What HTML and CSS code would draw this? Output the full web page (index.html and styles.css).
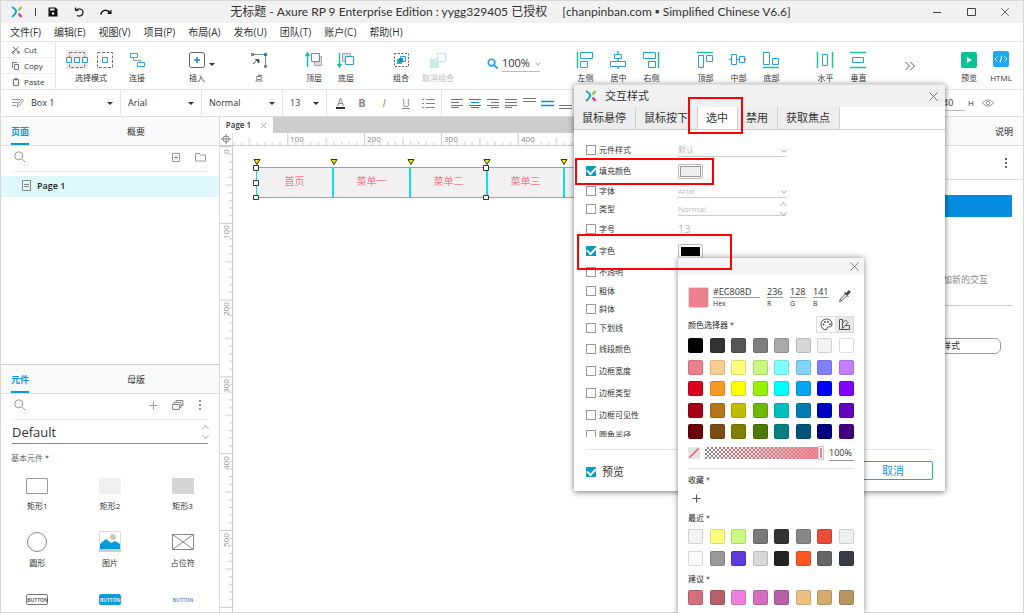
FILE: index.html
```html
<!DOCTYPE html>
<html lang="zh-CN">
<head>
<meta charset="utf-8">
<title>无标题 - Axure RP 9 Enterprise Edition</title>
<link rel="stylesheet" href="styles.css">
</head>
<body>
<svg class="defs" aria-hidden="true">
  <symbol id="logo" viewBox="0 0 12 12"><path d="M1 1Q6 4 5 6Q4 9 1 11" fill="none" stroke="#12a5dc" stroke-width="2"/><path d="M10.500 1L7.500 4.500" stroke="#8cc63f" stroke-width="2.200"/><path d="M7.500 7.500L10.500 11" stroke="#e5338c" stroke-width="2.200"/></symbol>
  <symbol id="close" viewBox="0 0 12 12"><path d="M1.500 1.500L10.500 10.500M10.500 1.500L1.500 10.500" fill="none" stroke="currentColor"/></symbol>
  <symbol id="search" viewBox="0 0 12 12"><circle cx="4.800" cy="4.800" r="4" fill="none" stroke="currentColor"/><path d="M7.800 7.800L11.500 11.500" stroke="currentColor"/></symbol>
  <symbol id="dots" viewBox="0 0 4 12"><path d="M1 1h2v2H1zM1 5h2v2H1zM1 9h2v2H1z" fill="currentColor"/></symbol>
</svg>
<div class="app">
  <header class="titlebar">
    <div class="quick">
      <svg width="12" height="12"><use href="#logo"/></svg>
      <span class="bar"></span>
      <button aria-label="保存"><svg width="10" height="10" viewBox="0 0 10 10"><path d="M1 .5H7.500L9.500 2.500V9.500H.5V1z" fill="#111"/><path d="M2 1.500h4.500v2H2z" fill="#f1f1f1"/><circle cx="5" cy="6.500" r="1.300" fill="#f1f1f1"/></svg></button>
      <button aria-label="撤销"><svg width="10" height="10" viewBox="0 0 10 10"><path d="M1.500 .5V3.500H4.500M1.500 3.500C4 .8 9 1.500 9 5.500C9 8.500 5.500 9.800 3 8.500" fill="none" stroke="#222" stroke-width="1.200"/></svg></button>
      <button aria-label="重做"><svg width="12" height="10" viewBox="0 0 12 10"><path d="M.7 7.500C2 2.500 7 2 10 6" fill="none" stroke="#111" stroke-width="1.500"/><path d="M11.500 2.500V7H7z" fill="#111"/></svg></button>
    </div>
    <h1>无标题 - Axure RP 9 Enterprise Edition : yygg329405 已授权 <span>[chanpinban.com ▪ Simplified Chinese V6.6]</span></h1>
    <div class="winctl">
      <button aria-label="最小化"><svg width="10" height="10"><path d="M1 5.500H9" stroke="#444"/></svg></button>
      <button aria-label="最大化"><svg width="10" height="10"><path d="M1.500 1.500h8v7h-8z" fill="none" stroke="#444"/></svg></button>
      <button aria-label="关闭"><svg width="10" height="10"><use href="#close"/></svg></button>
    </div>
  </header>
  <nav class="menubar">
    <button>文件(F)</button><button>编辑(E)</button><button>视图(V)</button><button>项目(P)</button><button>布局(A)</button><button>发布(U)</button><button>团队(T)</button><button>账户(C)</button><button>帮助(H)</button>
  </nav>
  <div class="toolbar">
    <div class="clip">
      <button><svg width="8" height="8" viewBox="0 0 8 8"><path d="M1 1L6.500 6M6.500 1L1 6" stroke="#666" fill="none"/><circle cx="1.200" cy="6.500" r="1" fill="none" stroke="#666"/><circle cx="6.500" cy="6.500" r="1" fill="none" stroke="#666"/></svg>Cut</button>
      <button><svg width="8" height="8" viewBox="0 0 8 8"><path d="M2.500 2.500h4v5h-4zM.5 6V.5H5" fill="none" stroke="#777"/></svg>Copy</button>
      <button><svg width="8" height="8" viewBox="0 0 8 8"><path d="M1.500 1.500h5v6h-5zM3 .5h2v1.500H3z" fill="none" stroke="#777"/></svg>Paste</button>
    </div>
    <div class="group g1">
      <button class="tool wide"><svg width="60" height="20" viewBox="0 0 60 20"><path d="M5 0h22v19H5z" fill="#ebebeb"/><path d="M8.500 2.500h15v15h-15zM36.500 2.500h15v15h-15z" fill="none" stroke="#777" stroke-dasharray="3 1.500"/><path d="M5.500 7.500h5v5h-5zM13.500 7.500h5v5h-5zM21.500 7.500h5v5h-5zM41.500 7.500h5v5h-5z" fill="#fff" stroke="#2c9de4"/></svg><span>选择模式</span></button>
      <button class="tool"><svg width="32" height="20" viewBox="0 0 32 20"><path d="M9.500 3.500h7v4h-7z" fill="none" stroke="#1cc29a"/><path d="M12.500 7.500v3h7v2" fill="none" stroke="#999"/><path d="M16.500 12.500h7v4h-7z" fill="none" stroke="#2c9de4"/></svg><span>连接</span></button>
    </div>
    <div class="group g2">
      <button class="tool"><svg width="32" height="20" viewBox="0 0 32 20"><rect x="8.500" y="2.500" width="15" height="15" rx="2" fill="none" stroke="#666"/><path d="M16 7v6M13 10h6" stroke="#1487d8" stroke-width="1.500"/><path d="M28 13h6l-3 3z" fill="#333"/></svg><span>插入</span></button>
    </div>
    <div class="group g3">
      <button class="tool"><svg width="32" height="20" viewBox="0 0 32 20"><path d="M9 4.500h13.500V16" fill="none" stroke="#888"/><path d="M8 3h3v3H8zM21 15h3v3h-3z" fill="#888"/><path d="M21 3h3v3h-3z" fill="#1487d8"/><path d="M10 14l3-3M12.500 9.500h3.500v3.500z" fill="#555" stroke="#555"/></svg><span>点</span></button>
    </div>
    <div class="group g4">
      <button class="tool"><svg width="32" height="20" viewBox="0 0 32 20"><path d="M9.500 17V4M7.500 6l2-3 2 3" fill="none" stroke="#1cc29a" stroke-width="1.500"/><path d="M16.500 6.500h7v9h-7z" fill="#ddd" stroke="#aaa"/><path d="M13.500 3.500h8v8h-8z" fill="#fff" stroke="#2c9de4"/></svg><span>顶层</span></button>
      <button class="tool"><svg width="32" height="20" viewBox="0 0 32 20"><path d="M9.500 3V16M7.500 14l2 3 2-3" fill="none" stroke="#1cc29a" stroke-width="1.500"/><path d="M12.500 3.500h8v8h-8z" fill="#ddd" stroke="#aaa"/><path d="M15.500 6.500h8v8h-8z" fill="#fff" stroke="#2c9de4"/></svg><span>底层</span></button>
    </div>
    <div class="group g4">
      <button class="tool"><svg width="32" height="20" viewBox="0 0 32 20"><path d="M9.500 3.500h14v13h-14z" fill="none" stroke="#666" stroke-dasharray="2 1.500"/><path d="M12 9h5v5h-5z" fill="#1cc29a"/><path d="M15.500 6.500h5v5h-5z" fill="#e7f5ff" stroke="#2c9de4"/><path d="M14 8h4v4h-4z" fill="#1487d8"/></svg><span>组合</span></button>
      <button class="tool off" disabled><svg width="32" height="20" viewBox="0 0 32 20"><path d="M8 9h9v9H8z" fill="#8fe0ca"/><path d="M15.500 3.500h8v8h-8z" fill="#fff" stroke="#8cc8ee"/><path d="M12 8h5v4h-5z" fill="#a6d8ee"/></svg><span>取消组合</span></button>
    </div>
    <div class="zoom"><svg width="11" height="11" viewBox="0 0 12 12"><circle cx="5" cy="5" r="3.600" fill="none" stroke="#1ba0e8" stroke-width="1.800"/><path d="M8 8l3.500 3.500" stroke="#1ba0e8" stroke-width="2"/></svg>
      <button>100%<i class="chev"></i></button></div>
    <div class="group g5">
      <button class="tool"><svg width="32" height="20" viewBox="0 0 32 20"><path d="M8.500 2v16" stroke="#1cc29a" stroke-width="1.500"/><path d="M11.500 2.500h12v6h-12zM11.500 11.500h7v6h-7z" fill="none" stroke="#2c9de4"/></svg><span>左侧</span></button>
      <button class="tool"><svg width="32" height="20" viewBox="0 0 32 20"><path d="M16 1v18" stroke="#1cc29a" stroke-width="1.500"/><path d="M12.500 4.500h7v4h-7zM8.500 11.500h15v5h-15z" fill="#fff" stroke="#2c9de4"/></svg><span>居中</span></button>
      <button class="tool"><svg width="32" height="20" viewBox="0 0 32 20"><path d="M23.500 2v16" stroke="#1cc29a" stroke-width="1.500"/><path d="M8.500 2.500h12v6h-12zM13.500 11.500h7v6h-7z" fill="none" stroke="#2c9de4"/></svg><span>右侧</span></button>
    </div>
    <div class="group g6">
      <button class="tool"><svg width="32" height="20" viewBox="0 0 32 20"><path d="M8 2.500h16" stroke="#1cc29a" stroke-width="1.500"/><path d="M9.500 5.500h5v12h-5zM17.500 5.500h6v6h-6z" fill="none" stroke="#2c9de4"/></svg><span>顶部</span></button>
      <button class="tool"><svg width="32" height="20" viewBox="0 0 32 20"><path d="M7 9.500h17" stroke="#1cc29a" stroke-width="1.500"/><path d="M9.500 4.500h5v10h-5zM17.500 6.500h5v6h-5z" fill="#fff" stroke="#2c9de4"/></svg><span>中部</span></button>
      <button class="tool"><svg width="32" height="20" viewBox="0 0 32 20"><path d="M8 17.500h16" stroke="#1cc29a" stroke-width="1.500"/><path d="M8.500 2.500h6v12h-6zM17.500 8.500h6v6h-6z" fill="none" stroke="#2c9de4"/></svg><span>底部</span></button>
    </div>
    <div class="group g6">
      <button class="tool"><svg width="32" height="20" viewBox="0 0 32 20"><path d="M8.500 2v16M23.500 2v16" stroke="#1cc29a" stroke-width="1.500"/><path d="M13.500 4.500h5v11h-5z" fill="none" stroke="#2c9de4"/></svg><span>水平</span></button>
      <button class="tool"><svg width="32" height="20" viewBox="0 0 32 20"><path d="M8 2.500h16M8 17.500h16" stroke="#1cc29a" stroke-width="1.500"/><path d="M10.500 7.500h11v5h-11z" fill="none" stroke="#2c9de4"/></svg><span>垂直</span></button>
    </div>
    <div class="publish">
      <button class="more" aria-label="更多"><svg width="12" height="10"><path d="M1.500 1l4 4-4 4M6.500 1l4 4-4 4" fill="none" stroke="#555"/></svg></button>
      <button class="tool"><svg width="32" height="20" viewBox="0 0 32 20"><rect x="8" y="2" width="16" height="16" rx="2" fill="#06c295"/><path d="M14 7l5 3-5 3z" fill="#fff"/></svg><span>预览</span></button>
      <button class="tool"><svg width="32" height="20" viewBox="0 0 32 20"><rect x="8" y="1" width="16" height="16" rx="2" fill="#1caaf5"/><path d="M12.500 6.500L10 9l2.500 2.500M19.500 6.500L22 9l-2.500 2.500M17 5.500l-2 7" fill="none" stroke="#fff"/></svg><span>HTML</span></button>
    </div>
  </div>
  <div class="format">
    <label class="pick p1"><svg width="12" height="10" viewBox="0 0 12 10"><path d="M0 1.500h8M0 4.500h6M0 7.500h4M5 9l1-3 4-5 1.500 1.500-4 5z" fill="none" stroke="#999"/></svg><select aria-label="样式"><option>Box 1</option></select></label>
    <label class="pick p2"><select aria-label="字体"><option>Arial</option></select></label>
    <label class="pick p2"><select aria-label="字形"><option>Normal</option></select></label>
    <label class="pick p3"><select aria-label="字号"><option>13</option></select></label>
    <div class="marks">
      <button class="ink">A</button><button><b>B</b></button><button><em>I</em></button><button><u>U</u></button>
      <button aria-label="列表"><svg width="13" height="10"><path d="M0 1.500h2M4 1.500h9M0 5.500h2M4 5.500h9M0 9.500h2M4 9.500h9" stroke="#888"/></svg></button>
    </div>
    <div class="aligns">
      <button aria-label="左对齐"><svg width="12" height="10"><path d="M0 1.500h12M0 4.500h8M0 7.500h12M0 9.500h8" stroke="#777"/></svg></button>
      <button aria-label="居中对齐"><svg width="12" height="10"><path d="M0 1.500h12M2 4.500h8M0 7.500h12M2 9.500h8" stroke="#1487d8"/></svg></button>
      <button aria-label="右对齐"><svg width="12" height="10"><path d="M0 1.500h12M4 4.500h8M0 7.500h12M4 9.500h8" stroke="#777"/></svg></button>
      <button aria-label="两端对齐"><svg width="12" height="10"><path d="M0 1.500h12M0 4.500h12M0 7.500h12M0 9.500h7" stroke="#777"/></svg></button>
      <button aria-label="顶端"><svg width="13" height="12"><path d="M0 1.500h13M0 4.500h13" stroke="#777"/></svg></button>
      <button aria-label="中间"><svg width="13" height="12"><path d="M0 4.500h13M0 8.500h13" stroke="#1487d8" stroke-width="1.500"/></svg></button>
      <button aria-label="底端"><svg width="13" height="12"><path d="M0 8.500h13M0 11.500h13" stroke="#777"/></svg></button>
    </div>
    <div class="size"><input aria-label="高度" value="40"><span>H</span>
      <button aria-label="可见"><svg width="12" height="8" viewBox="0 0 12 8"><path d="M.5 4Q6-2.500 11.500 4Q6 10.500 .5 4z" fill="none" stroke="#999"/><circle cx="6" cy="4" r="1.800" fill="none" stroke="#999"/></svg></button></div>
  </div>
  <main class="work">
    <aside class="left">
      <section class="pane">
        <div class="tabs"><button class="on">页面</button><button>概要</button></div>
        <div class="find"><svg width="12" height="12"><use href="#search"/></svg>
          <button aria-label="添加页面"><svg width="9" height="10"><path d="M.5 1.500h7v8h-7zM4 3.500v4M2 5.500h4" fill="none" stroke="#999"/></svg></button>
          <button aria-label="添加文件夹"><svg width="11" height="10"><path d="M.5 1.500h4l1 1.500h5v6H.5z" fill="none" stroke="#999"/></svg></button></div>
        <a class="page" href="#page1"><svg width="9" height="11"><path d="M.5.5h8v10h-8zM2 4.500h5M2 6.500h5" fill="none" stroke="#888"/></svg>Page 1</a>
      </section>
      <section class="pane lib">
        <div class="tabs"><button class="on">元件</button><button>母版</button></div>
        <div class="find"><svg width="12" height="12"><use href="#search"/></svg>
          <button aria-label="添加"><svg width="9" height="9"><path d="M4.500.5v8M.5 4.500h8" stroke="#999"/></svg></button>
          <button aria-label="元件库"><svg width="12" height="10"><path d="M.5 4.500h7v5h-7zM2 4.500v-2h7v5h-1.500M4 2.500v-2h7v5H9" fill="none" stroke="#888"/></svg></button>
          <button aria-label="选项"><svg width="4" height="12"><use href="#dots"/></svg></button></div>
        <label class="library"><select aria-label="元件库"><option>Default</option></select><i class="updown"></i></label>
        <h2>基本元件 <small>▼</small></h2>
        <div class="widgets">
          <div><svg width="22" height="16"><path d="M.5.5h21v15H.5z" fill="#fff" stroke="#999"/></svg>矩形1</div>
          <div><svg width="22" height="16"><path d="M0 0h22v16H0z" fill="#f0f0f0"/></svg>矩形2</div>
          <div><svg width="22" height="16"><path d="M0 0h22v16H0z" fill="#d6d6d6"/></svg>矩形3</div>
          <div class="big"><svg width="22" height="22"><circle cx="11" cy="11" r="9.500" fill="#fff" stroke="#888"/></svg>圆形</div>
          <div class="big"><svg width="22" height="22"><path d="M.5.500h21v18H.5z" fill="#fff" stroke="#ddd"/><circle cx="14" cy="6" r="3" fill="#c8c8c8"/><path d="M1 13l6-5 5 4 4-2 5 3v5H1z" fill="#049bdc"/><path d="M0 18h22v3H0z" fill="#ccc"/></svg>图片</div>
          <div class="big"><svg width="22" height="22"><path d="M.5 3.500h21v15H.5zM.5 3.500l21 15M21.500 3.500L.5 18.500" fill="#fff" stroke="#888"/></svg>占位符</div>
          <div><span class="wb">BUTTON</span></div>
          <div><span class="wb fill">BUTTON</span></div>
          <div><span class="wb bare">BUTTON</span></div>
        </div>
      </section>
    </aside>
    <section class="center">
      <div class="pagetabs"><button>Page 1 <svg width="7" height="7" viewBox="0 0 12 12"><use href="#close"/></svg></button></div>
      <div class="rulerrow">
        <svg class="corner" width="12" height="12"><circle cx="6" cy="6" r="3" fill="none" stroke="#888"/><path d="M6 1v10M1 6h10" stroke="#888"/></svg>
        <svg class="hr" height="12"><defs><pattern id="ht" x="-22.500" width="76.800" height="12" patternUnits="userSpaceOnUse"><path d="M.5 0v12M38.900 5v7M8.200 9v3M15.900 9v3M23.500 9v3M31.200 9v3M46.600 9v3M54.300 9v3M61.900 9v3M69.600 9v3" stroke="#ccc"/></pattern></defs><rect width="100%" height="12" fill="url(#ht)"/><text x="57" y="9">100</text><text x="134" y="9">200</text><text x="211" y="9">300</text><text x="288" y="9">400</text></svg>
      </div>
      <div class="canvasrow">
        <svg class="vr" width="12" height="100%"><defs><pattern id="vt" y="0" width="12" height="76.800" patternUnits="userSpaceOnUse"><path d="M0 .5h12M5 38.900h7M9 8.200h3M9 15.900h3M9 23.500h3M9 31.200h3M9 46.600h3M9 54.300h3M9 61.900h3M9 69.600h3" stroke="#ccc"/></pattern></defs><rect width="12" height="100%" fill="url(#vt)"/><g><text transform="translate(9 8) rotate(-90)">0</text><text transform="translate(9 93) rotate(-90)">100</text><text transform="translate(9 170) rotate(-90)">200</text><text transform="translate(9 247) rotate(-90)">300</text><text transform="translate(9 324) rotate(-90)">400</text><text transform="translate(9 401) rotate(-90)">500</text></g></svg>
        <div class="canvas">
          <div class="nodes"><div>首页</div><div>菜单一</div><div>菜单二</div><div>菜单三</div><div>菜单四</div></div>
          <svg class="handles" width="320" height="44" viewBox="0 0 320 44"><g fill="#f4e800" stroke="#333"><path d="M2 3.500h6l-3 5z"/><path d="M79 3.500h6l-3 5z"/><path d="M156 3.500h6l-3 5z"/><path d="M232 3.500h6l-3 5z"/><path d="M309 3.500h6l-3 5z"/></g><path d="M1.500 9.500h5v5h-5zM1.500 24.500h5v5h-5zM1.500 39.500h5v4h-5zM231.500 9.500h5v5h-5zM231.500 39.500h5v4h-5z" fill="#fff" stroke="#333"/></svg>
        </div>
      </div>
    </section>
    <aside class="right">
      <div class="tabs"><button>说明</button></div>
      <div class="opts"><button aria-label="选项"><svg width="4" height="12"><use href="#dots"/></svg></button></div>
      <button class="primary" aria-label="新建交互"></button>
      <p>点击上方按钮，添加新的交互</p>
      <button class="styles">交互样式</button>
    </aside>
  </main>

  <div class="dialog" role="dialog" aria-label="交互样式">
    <div class="dhead"><svg width="12" height="12"><use href="#logo"/></svg><span>交互样式</span><button aria-label="关闭"><svg width="11" height="11" viewBox="0 0 12 12"><use href="#close"/></svg></button></div>
    <div class="dtabs"><button>鼠标悬停</button><button>鼠标按下</button><button class="on">选中</button><button>禁用</button><button>获取焦点</button></div>
    <div class="options">
      <div class="row"><label><input type="checkbox">元件样式</label><span class="val">默认<i class="chev"></i></span></div>
      <div class="row tall"><label><input type="checkbox" checked>填充颜色</label><button class="chip light" aria-label="填充颜色"></button></div>
      <div class="row short"><label><input type="checkbox">字体</label><span class="val">Arial<i class="chev"></i></span></div>
      <div class="row short"><label><input type="checkbox">类型</label><span class="val">Normal<i class="updown"></i></span></div>
      <div class="row tall"><label><input type="checkbox">字号</label><span class="num">13</span></div>
      <div class="row tall"><label><input type="checkbox" checked>字色</label><button class="chip" aria-label="字色"></button></div>
      <div class="row"><label><input type="checkbox">不透明</label></div>
      <div class="row short"><label><input type="checkbox">粗体</label></div>
      <div class="row short"><label><input type="checkbox">斜体</label></div>
      <div class="row"><label><input type="checkbox">下划线</label></div>
      <div class="row tall"><label><input type="checkbox">线段颜色</label></div>
      <div class="row tall"><label><input type="checkbox">边框宽度</label></div>
      <div class="row tall"><label><input type="checkbox">边框类型</label></div>
      <div class="row tall"><label><input type="checkbox">边框可见性</label></div>
      <div class="row short"><label><input type="checkbox">圆角半径</label></div>
    </div>
    <div class="dfoot"><label><input type="checkbox" checked>预览</label><button>取消</button></div>

    <div class="picker" role="dialog" aria-label="颜色">
      <div class="phead"><button aria-label="关闭"><svg width="11" height="11" viewBox="0 0 12 12"><use href="#close"/></svg></button></div>
      <div class="pbody">
        <div class="rgb">
          <span class="current"></span>
          <label class="hex"><input value="#EC808D">Hex</label><label><input value="236">R</label><label><input value="128">G</label><label><input value="141">B</label>
          <button aria-label="取色"><svg width="14" height="14" viewBox="0 0 14 14"><path d="M7.500 5L2.500 10L1.500 12.500L4 11.500L9 6.500" fill="#fff" stroke="#555"/><path d="M6.500 3.500l4 4M8 5l3-3 1 1L9 6z" fill="#444" stroke="#444" stroke-width="1.300"/></svg></button>
        </div>
        <div class="phrow"><h3>颜色选择器 <small>▼</small></h3><div class="modes"><button aria-label="色盘"><svg width="13" height="13" viewBox="0 0 13 13"><path d="M6.500 1C3 1 1 3.500 1 6.500S3.500 12 6 12C7.500 12 6.500 10 7.500 9.200C8.500 8.500 12 9.500 12 6C12 3 9.500 1 6.500 1z" fill="none" stroke="#444"/><g fill="#444"><circle cx="3.500" cy="6.500" r=".9"/><circle cx="5" cy="4" r=".9"/><circle cx="8" cy="4" r=".9"/><circle cx="10" cy="6.300" r=".9"/></g></svg></button><button class="on" aria-label="色板"><svg width="13" height="13" viewBox="0 0 13 13"><path d="M1.500 1.500h3v10h-3zM4.500 5l3-3 2.500 2.500-5.500 6M7.500 7.500h4v4h-7" fill="none" stroke="#555"/></svg></button></div></div>
        <div class="sw main"></div>
        <div class="alpha"><svg width="12" height="12"><rect width="12" height="12" rx="1" fill="#e4e4e4"/><path d="M1.500 10.500L10.500 1.500" stroke="#f0506a" stroke-width="1.500"/></svg><input type="range" value="100" aria-label="不透明度"><input class="pct" value="100%" aria-label="不透明度数值"></div>
        <h3 class="fav">收藏 <small>▼</small></h3>
        <button class="plus" aria-label="添加收藏"><svg width="9" height="9"><path d="M4.500.5v8M.5 4.500h8" stroke="#555"/></svg></button>
        <h3>最近 <small>▼</small></h3>
        <div class="sw recent"></div>
        <h3>建议 <small>▼</small></h3>
        <div class="sw hint"></div>
      </div>
    </div>
    <div class="mark m1"></div><div class="mark m2"></div><div class="mark m3"></div>
  </div>
</div>
<script src="swatches.js"></script>
</body>
</html>
```
FILE: swatches.js
```js
const palettes = {
  main: '000000 333333 555555 7f7f7f aaaaaa d7d7d7 f2f2f2 ffffff ec808d facd91 ffff80 caf982 80ffff 81d3f8 8080ff c280ff d9001b f59a23 ffff00 95f204 00ffff 02a7f0 0000ff 8400ff a30014 b8741a bfbf00 70b603 00bfbf 027db4 0000bf 6300bf 6b000d 7b4d12 808000 4b7902 008080 015478 000080 420080',
  recent: 'f2f2f2 ffff80 caf982 797979 333333 888888 e74c3c eeeeee fafafa 999999 5c3bd8 d7d7d7 242424 ff5722 666666 393d49',
  hint: 'd46f7c b8616b ec80dc d46fc0 b861a8 ecc080 d4ac6f b89561'
};
for (const [name, list] of Object.entries(palettes)) {
  const box = document.querySelector('.sw.' + name);
  for (const hex of list.split(' ')) {
    const b = document.createElement('button');
    b.style.background = '#' + hex;
    b.setAttribute('aria-label', '#' + hex);
    box.append(b);
  }
}
```
FILE: styles.css
```css
* { box-sizing: border-box; }
body, h1, h2, h3, p { margin: 0; }
body { font: 9px/12px "Open Sans", "Noto Sans", "Noto Sans CJK SC", sans-serif; color: #333; overflow: hidden; }
button, select, input { font: inherit; color: inherit; background: none; border: 0; padding: 0; margin: 0; outline: 0; border-radius: 0; }
button { display: inline-flex; align-items: center; justify-content: center; white-space: nowrap; }
select { appearance: none; }
svg { flex: none; display: block; overflow: visible; }
small { font-size: 4px; line-height: 4px; color: #777; vertical-align: 2px; }
.defs { position: absolute; width: 0; height: 0; }
.app { position: relative; height: 100vh; display: flex; flex-direction: column; border: 1px solid #d8d8d8; background: #fff; }

.titlebar { flex: 0 0 22px; display: flex; justify-content: space-between; align-items: center; background: #f1f1f1; padding: 0 13px 0 10px; }
.quick { flex: 1; display: flex; align-items: center; gap: 16px; }
.bar { width: 1px; height: 8px; background: #444; margin: 0 -4px; }
.titlebar h1 { font: 400 12px/18px Lato, "Noto Sans CJK SC", sans-serif; white-space: pre; }
.titlebar h1 span { margin-left: 12px; }
.winctl { flex: 1; display: flex; justify-content: flex-end; gap: 24px; color: #444; }
.menubar { flex: 0 0 19px; display: flex; gap: 13px; padding-left: 9px; font-size: 10px; border-bottom: 1px solid #e6e6e6; }

.toolbar { flex: 0 0 48px; display: flex; border-bottom: 1px solid #e6e6e6; font-size: 8px; }
.clip { width: 55px; display: flex; flex-direction: column; border-right: 1px solid #e6e6e6; }
.clip button { flex: 1; justify-content: flex-start; gap: 4px; padding-left: 11px; border-bottom: 1px solid #eee; }
.clip button:last-child { border-bottom: 0; }
.group { display: flex; padding-top: 8px; }
.tool { width: 32px; height: 34px; flex-direction: column; justify-content: flex-start; gap: 2px; }
.tool.wide { width: 60px; }
.tool span { line-height: 12px; }
.tool.off { color: #bbb; margin-left: 5px; }
.tool.off svg { opacity: .5; }
.g1 { margin-left: 5px; }
.g2 { margin-left: 28px; }
.g3 { margin-left: 30px; }
.g4 { margin-left: 23px; }
.g5 { margin-left: 29px; }
.g6 { margin-left: 21px; }
.g5 .tool, .g6 .tool { width: 33px; }
.zoom { margin-left: 33px; display: flex; align-items: center; gap: 4px; height: 42px; }
.zoom button { border-bottom: 1px solid #bbb; font-size: 11px; height: 18px; gap: 6px; }
.chev { width: 4px; height: 4px; border: solid #bbb; border-width: 0 1px 1px 0; rotate: 45deg; }
.updown { display: flex; flex-direction: column; gap: 2px; }
.updown::before, .updown::after { content: ""; width: 4px; height: 4px; border: solid #bbb; border-width: 1px 0 0 1px; rotate: 45deg; }
.updown::after { rotate: 225deg; }
.publish { margin-left: auto; display: flex; padding: 8px 6px 0 0; }
.more { height: 32px; margin-right: 37px; }

.format { flex: 0 0 27px; display: flex; border-bottom: 1px solid #ddd; }
.pick { display: flex; align-items: center; border-right: 1px solid #e6e6e6; padding: 0 7px; }
.pick select { flex: 1; min-width: 0; }
.pick::after { content: ""; border: 3px solid transparent; border-top-color: #333; border-bottom: 0; }
.p1 { width: 120px; gap: 7px; padding-left: 11px; }
.p2 { width: 81px; }
.p3 { width: 44px; }
.marks { width: 115px; display: flex; align-items: center; border-right: 1px solid #e6e6e6; padding-left: 2px; font-size: 11px; color: #888; }
.marks button { width: 22px; }
.marks .ink { width: 9px; margin: 0 6px 0 7px; line-height: 10px; border-bottom: 2px solid #333; }
.aligns { display: flex; align-items: center; padding-left: 6px; }
.aligns button { width: 18px; }
.size { margin-left: auto; display: flex; align-items: center; gap: 3px; padding-right: 29px; font-size: 8px; }
.size input { width: 36px; padding-left: 14px; height: 15px; border-bottom: 1px solid #bbb; font-size: 9px; }
.size button { margin-left: 5px; }

.work { flex: 1; min-height: 0; display: flex; }
.left { width: 219px; display: flex; flex-direction: column; border-right: 1px solid #ddd; }
.pane { flex: 1 1 0; min-height: 0; overflow: hidden; }
.lib { border-top: 1px solid #ccc; }
.tabs { height: 29px; display: flex; background: #fafafa; border-bottom: 1px solid #ddd; padding-left: 10px; }
.tabs button { flex: none; margin-right: 98px; padding-top: 3px; border-bottom: 2px solid transparent; }
.tabs .on { color: #0d96e0; font-weight: 700; border-color: #0d96e0; }
.find { height: 26px; margin: 0 11px; display: flex; align-items: center; gap: 14px; color: #999; border-bottom: 1px solid #eee; padding: 0 2px 3px; }
.lib .find { padding-right: 6px; }
.find > svg { margin-right: auto; }
.page { height: 21px; margin-top: 4px; display: flex; align-items: center; gap: 6px; padding: 0 0 2px 21px; background: #dff9fb; color: #222; font-weight: 600; text-decoration: none; }
.library { display: flex; align-items: center; margin: 0 11px; height: 24px; border-bottom: 1px solid #888; }
.library select { flex: 1; font-size: 13px; line-height: 20px; }
.pane h2 { font-size: 8px; line-height: 12px; font-weight: 400; padding: 8px 0 0 10px; color: #666; }
.widgets { display: grid; grid-template-columns: repeat(3, 1fr); grid-template-rows: 54px 56px 42px; font-size: 8px; padding-top: 4px; }
.widgets div { display: flex; flex-direction: column; align-items: center; justify-content: center; gap: 6px; }
.widgets .big { gap: 4px; }
.wb { width: 22px; height: 11px; font-size: 5px; line-height: 10px; text-align: center; font-weight: 600; border: 1px solid #777; border-radius: 2px; }
.wb.fill { background: #109ad8; border-color: #109ad8; color: #fff; }
.wb.bare { border-color: transparent; color: #3a7cc0; }

.center { flex: 1; min-width: 0; display: flex; flex-direction: column; }
.pagetabs { flex: 0 0 16px; background: #cdcdcd; display: flex; }
.pagetabs button { width: 53px; background: #fff; font-size: 8px; font-weight: 600; gap: 9px; }
.pagetabs svg { color: #777; }
.rulerrow { flex: 0 0 13px; display: flex; border-bottom: 1px solid #ccc; }
.rulerrow svg, .vr { overflow: hidden; }
.hr { flex: 1; min-width: 0; border-left: 1px solid #ddd; }
.hr text, .vr text { font-size: 8px; fill: #888; }
.canvasrow { flex: 1; min-height: 0; display: flex; }
.vr { border-right: 1px solid #ccc; width: 13px; }
.canvas { flex: 1; position: relative; overflow: hidden; }
.nodes { position: absolute; left: 23px; top: 21px; display: flex; border: 1px solid #10dfe0; }
.nodes div { width: 77px; height: 29px; background: #f1f1f1; border-right: 2px solid #10dfe0; color: #ee7d8c; font-size: 10px; line-height: 27px; text-align: center; }
.handles { position: absolute; left: 19px; top: 10px; }

.right { width: 220px; border-left: 1px solid #ddd; }
.right .tabs { justify-content: flex-end; }
.right .tabs button { margin-right: 10px; }
.opts { height: 34px; display: flex; justify-content: flex-end; padding-right: 15px; color: #666; border-bottom: 1px solid #ddd; }
.primary { display: flex; width: 195px; height: 22px; margin: 15px 11px 0 auto; background: #048de0; border-radius: 1px; }
.right p { margin: 57px 11px 0; padding: 0 24px 19px 0; text-align: right; color: #888; border-bottom: 1px solid #ccc; }
.styles { display: flex; width: 118px; height: 16px; margin: 32px 22px 0 auto; border: 1px solid #999; border-radius: 6px; }

.dialog { position: absolute; left: 573px; top: 83px; width: 371px; background: #fff; box-shadow: 0 1px 6px #0008; }
.dhead { height: 23px; display: flex; align-items: center; gap: 8px; padding: 0 6px 0 11px; background: #f1f1f1; font-size: 11px; border-top: 1px solid #e0e0e0; }
.dhead button { margin-left: auto; color: #666; }
.dtabs { display: flex; height: 23px; font-size: 11px; border-bottom: 1px solid #ccc; }
.dtabs button { padding: 0 9px 0 8px; border-right: 1px solid #d0d0d0; background: #ededed; }
.dtabs .on { background: #fff; }
.options { height: 297px; overflow: hidden; margin: 10px 12px 0; font-size: 8px; }
.row { height: 20px; display: flex; align-items: center; }
.tall { height: 22px; }
.short { height: 18px; }
.row label { width: 92px; display: flex; align-items: center; gap: 3px; }
input[type=checkbox] { appearance: none; width: 10px; height: 10px; border: 1px solid #999; background: #fff; display: grid; place-items: center; flex: none; }
input[type=checkbox]:checked { background: #0a9bc4; border-color: #0a9bc4; }
input[type=checkbox]:checked::after { content: ""; width: 7px; height: 4px; border: solid #fff; border-width: 0 0 2px 2px; rotate: -45deg; margin-bottom: 2px; }
.val { width: 108px; height: 14px; display: flex; align-items: center; justify-content: space-between; color: #bbb; border-bottom: 1px solid #ccc; }
.num { color: #bbb; font-size: 11px; }
.chip { width: 25px; height: 15px; border: 1px solid #bbb; border-radius: 2px; background: #000 content-box; padding: 2px; }
.chip.light { background-color: #efefef; box-shadow: inset 0 0 0 1px #fff, inset 0 0 0 2px #999; }
.dfoot { margin: 12px 12px 0; border-top: 1px solid #e6e6e6; height: 42px; display: flex; justify-content: space-between; align-items: center; font-size: 11px; }
.dfoot label { display: flex; align-items: center; gap: 6px; padding-top: 3px; }
.dfoot button { width: 80px; height: 19px; border: 1px solid #2a9fe5; border-radius: 2px; color: #1595e2; }

.picker { position: absolute; left: 104px; top: 174px; width: 186px; background: #fff; box-shadow: 0 0 6px #0007; font-size: 8px; height: calc(100vh - 258px); overflow: hidden; }
.phead { height: 17px; background: #f4f4f4; display: flex; justify-content: flex-end; padding-right: 4px; color: #777; }
.pbody { padding: 10px 10px 0; }
.rgb { display: flex; align-items: flex-start; gap: 7px; }
.current { width: 21px; height: 21px; margin: 2px -3px 0 0; background: #ec808d; border-radius: 2px; border: 1px solid #ddd; }
.rgb label { width: 16px; display: flex; flex-direction: column; font-size: 7px; }
.rgb .hex { width: 47px; }
.rgb input { width: 100%; height: 13px; border-bottom: 1px solid #999; font-size: 9px; line-height: 12px; }
.rgb button { margin: 4px 2px 0 auto; }
.phrow { display: flex; justify-content: space-between; align-items: center; margin-top: 6px; height: 17px; }
h3 { font-size: 8px; line-height: 12px; font-weight: 400; color: #222; }
.modes { display: flex; border: 1px solid #ddd; height: 17px; }
.modes button { width: 18px; }
.modes .on { background: #e8e8e8; }
.sw { display: grid; grid-template-columns: repeat(8, 15px); grid-auto-rows: 15px; justify-content: space-between; align-content: space-between; }
.sw button { border: 1px solid #0002; border-radius: 2px; }
.main { height: 101px; margin-top: 5px; }
.recent { height: 37px; margin: 5px 0 7px; }
.hint { margin-top: 5px; }
.alpha { display: flex; align-items: center; height: 16px; margin: 6px 0 7px; }
.alpha svg { margin-right: 5px; }
.alpha input[type=range] { appearance: none; flex: 1; min-width: 0; margin-right: 6px; height: 12px; background: linear-gradient(90deg, transparent, #ec808d), repeating-conic-gradient(#888 0 25%, #fff 0 50%) 0 0 / 4px 4px; }
.alpha input::-webkit-slider-thumb { appearance: none; width: 4px; height: 12px; background: #ec808d; border: 1px solid #fff; outline: 1px solid #ccc; }
.alpha .pct { width: 25px; height: 15px; font-size: 9px; border-bottom: 1px solid #999; }
.fav { border-top: 1px solid #e0e0e0; padding-top: 5px; }
.plus { display: flex; margin: 8px 4px 9px; }

.mark { position: absolute; border: 2px solid #f00; pointer-events: none; }
.m1 { left: 114px; top: 13px; width: 55px; height: 37px; }
.m2 { left: 1px; top: 74px; width: 139px; height: 27px; }
.m3 { left: 3px; top: 150px; width: 155px; height: 36px; }
```
